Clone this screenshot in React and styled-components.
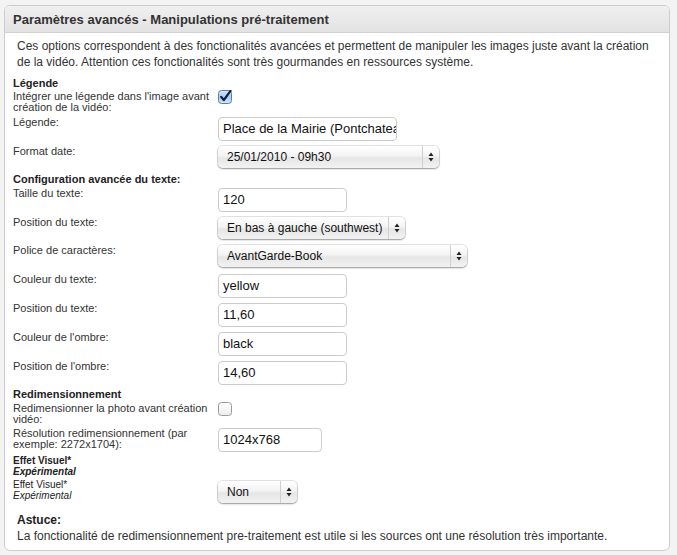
import React from "react";
import styled, { createGlobalStyle } from "styled-components";

const Global = createGlobalStyle`
  html, body { margin: 0; padding: 0; background: #f3f3f3; }
  body { font-family: "Liberation Sans", Arial, sans-serif; color: #333; }
`;

const Page = styled.div`
  padding: 5px 8px 6px 4px;
`;

const Panel = styled.section`
  width: 664px;
  border: 1px solid #cdcdcd;
  border-radius: 6px;
  background: #fff;
  overflow: hidden;
`;

const Header = styled.h2`
  margin: 0;
  height: 26px;
  line-height: 27px;
  padding-left: 8px;
  font-size: 13px;
  font-weight: bold;
  color: #333;
  background: linear-gradient(#f0f0f0, #e3e3e3);
  border-bottom: 1px solid #d2d2d2;
`;

const Body = styled.div`
  padding: 5px 8px 6px 8px;
`;

const Para = styled.p`
  margin: ${p => p.$mt || 0}px 0 0 4px;
  font-size: 12px;
  line-height: 16px;
  color: #333;
`;

const Heading = styled.div`
  margin-top: ${p => p.$mt || 0}px;
  margin-left: ${p => p.$ml || 0}px;
  font-size: ${p => p.$size || 11}px;
  font-weight: bold;
  line-height: ${p => p.$lh || 14}px;
  color: #222;
`;

const ExpHeading = styled.div`
  margin-top: ${p => p.$mt || 0}px;
  font-size: 10px;
  line-height: 11px;
  color: #222;
  font-weight: ${p => (p.$bold ? "bold" : "normal")};
  em { font-style: italic; }
`;

const Row = styled.div`
  display: grid;
  grid-template-columns: 205px auto;
  align-items: start;
  margin-top: ${p => p.$mt || 0}px;
`;

const Label = styled.div`
  font-size: 11px;
  line-height: 11px;
  color: #333;
  padding-top: ${p => p.$pt || 0}px;
  padding-right: 2px;
`;

const Control = styled.div`
  padding-top: ${p => p.$pt || 0}px;
  display: flex;
`;

const Input = styled.div`
  box-sizing: border-box;
  width: ${p => p.$w}px;
  height: 24px;
  border: 1px solid #cbcbcb;
  border-radius: 4px;
  background: #fff;
  padding-left: 4px;
  font-size: 13px;
  line-height: 22px;
  color: #111;
  white-space: nowrap;
  overflow: hidden;
`;

const SelectBox = styled.div`
  box-sizing: border-box;
  width: ${p => p.$w}px;
  height: 22px;
  border-radius: 5px;
  background: linear-gradient(#ffffff 0%, #f3f3f3 45%, #e6e6e6 55%, #f2f2f2 100%);
  box-shadow: 0 0 0 1px rgba(0,0,0,0.10), 0 1px 2px rgba(0,0,0,0.35);
  display: flex;
  align-items: stretch;
  font-size: 12px;
  color: #111;
`;

const SelectText = styled.span`
  flex: 1;
  padding-left: 9px;
  line-height: 22px;
  white-space: nowrap;
  overflow: hidden;
`;

const SelectArrows = styled.span`
  width: 16px;
  border-left: 1px solid #cfcfcf;
  display: flex;
  align-items: center;
  justify-content: center;
`;

const CheckWrap = styled.span`
  display: inline-flex;
  width: 14px;
  height: 14px;
`;

const Arrows = () => (
  <svg width="6" height="10" viewBox="0 0 6 10">
    <path d="M3 0.5 L5.5 4 L0.5 4 Z" fill="#222" />
    <path d="M3 9.5 L5.5 6 L0.5 6 Z" fill="#222" />
  </svg>
);

const Select = ({ w, children }) => (
  <SelectBox $w={w}>
    <SelectText>{children}</SelectText>
    <SelectArrows><Arrows /></SelectArrows>
  </SelectBox>
);

const Checkbox = ({ checked }) => (
  <CheckWrap>
    <svg width="14" height="14" viewBox="0 0 14 14">
      <defs>
        <linearGradient id={checked ? "cbOn" : "cbOff"} x1="0" y1="0" x2="0" y2="1">
          {checked ? (
            <>
              <stop offset="0" stopColor="#d6e8fb" />
              <stop offset="0.5" stopColor="#a9cdf3" />
              <stop offset="1" stopColor="#cfe6fc" />
            </>
          ) : (
            <>
              <stop offset="0" stopColor="#ffffff" />
              <stop offset="1" stopColor="#ececec" />
            </>
          )}
        </linearGradient>
      </defs>
      <rect x="0.5" y="0.5" width="13" height="13" rx="3" fill={`url(#${checked ? "cbOn" : "cbOff"})`} stroke={checked ? "#5a7ea8" : "#9a9a9a"} />
      {checked && (
        <path d="M3.2 6.8 L5.8 10.2 L12.5 0.8" fill="none" stroke="#0f1e3a" strokeWidth="2.2" strokeLinecap="round" strokeLinejoin="round" />
      )}
    </svg>
  </CheckWrap>
);

const Field = ({ label, mt, lpt, cpt, children }) => (
  <Row $mt={mt}>
    <Label $pt={lpt}>{label}</Label>
    <Control $pt={cpt}>{children}</Control>
  </Row>
);

export default function App() {
  return (
    <>
      <Global />
      <Page>
        <Panel>
          <Header>Paramètres avancés - Manipulations pré-traitement</Header>
          <Body>
            <Para>
              Ces options correspondent à des fonctionalités avancées et permettent de manipuler les images juste avant la création de la vidéo. Attention ces fonctionalités sont très gourmandes en ressources système.
            </Para>
            <Heading $mt={6}>Légende</Heading>
            <Field label="Intégrer une légende dans l'image avant création de la vidéo:" lpt={1}>
              <Checkbox checked />
            </Field>
            <Field label="Légende:" mt={4}>
              <Input $w={179}>Place de la Mairie (Pontchateau)</Input>
            </Field>
            <Field label="Format date:" mt={5}>
              <Select w={221}>25/01/2010 - 09h30</Select>
            </Field>
            <Heading $mt={4}>Configuration avancée du texte:</Heading>
            <Field label="Taille du texte:" mt={2}>
              <Input $w={129}>120</Input>
            </Field>
            <Field label="Position du texte:" mt={5}>
              <Select w={187}>En bas à gauche (southwest)</Select>
            </Field>
            <Field label="Police de caractères:" mt={6}>
              <Select w={249}>AvantGarde-Book</Select>
            </Field>
            <Field label="Couleur du texte:" mt={7}>
              <Input $w={129}>yellow</Input>
            </Field>
            <Field label="Position du texte:" mt={5}>
              <Input $w={129}>11,60</Input>
            </Field>
            <Field label="Couleur de l'ombre:" mt={5}>
              <Input $w={129}>black</Input>
            </Field>
            <Field label="Position de l'ombre:" mt={5}>
              <Input $w={129}>14,60</Input>
            </Field>
            <Heading $mt={2}>Redimensionnement</Heading>
            <Field label="Redimensionner la photo avant création vidéo:" mt={1} lpt={1}>
              <Checkbox />
            </Field>
            <Field label="Résolution redimensionnement (par exemple: 2272x1704):" mt={3}>
              <Input $w={104}>1024x768</Input>
            </Field>
            <ExpHeading $mt={3} $bold>
              Effet Visuel*<br /><em>Expérimental</em>
            </ExpHeading>
            <Row $mt={2}>
              <ExpHeading>
                Effet Visuel*<br /><em>Expérimental</em>
              </ExpHeading>
              <Control $pt={2}>
                <Select w={79}>Non</Select>
              </Control>
            </Row>
            <Heading $mt={9} $ml={4} $size={12} $lh={16}>Astuce:</Heading>
            <Para>
              La fonctionalité de redimensionnement pre-traitement est utile si les sources ont une résolution très importante.
            </Para>
          </Body>
        </Panel>
      </Page>
    </>
  );
}
